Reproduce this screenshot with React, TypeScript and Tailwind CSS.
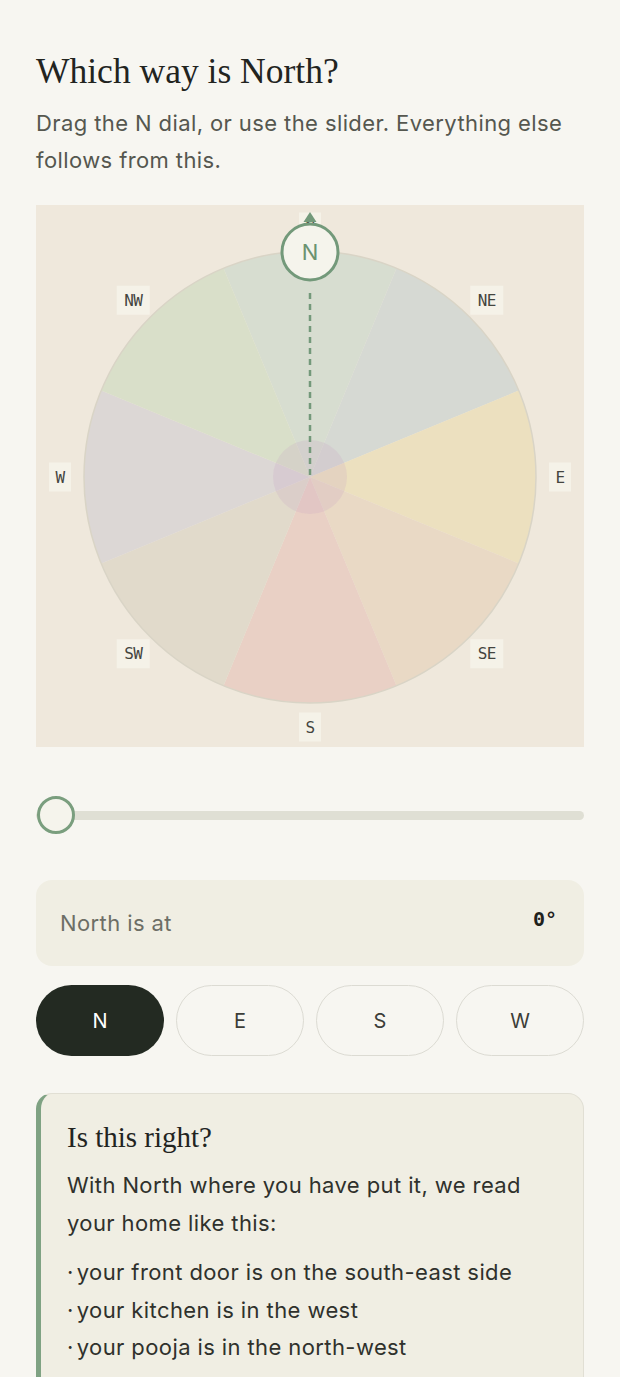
import React, { useState } from 'react';

const CX = 274;
const CY = 272;
const R = 226;
const LABEL_R = 250;

const directions = [
  { key: 'N', angle: 0, fill: '#d7ddd0' },
  { key: 'NE', angle: 45, fill: '#d6d9d3' },
  { key: 'E', angle: 90, fill: '#ece0bf' },
  { key: 'SE', angle: 135, fill: '#e9d9c5' },
  { key: 'S', angle: 180, fill: '#e9d0c5' },
  { key: 'SW', angle: 225, fill: '#e1dacb' },
  { key: 'W', angle: 270, fill: '#dcd7d5' },
  { key: 'NW', angle: 315, fill: '#d9dfc9' },
];

const pt = (deg: number, r: number) => {
  const a = (deg * Math.PI) / 180;
  return [CX + r * Math.sin(a), CY - r * Math.cos(a)];
};

const sectorPath = (deg: number) => {
  const [x1, y1] = pt(deg - 22.5, R);
  const [x2, y2] = pt(deg + 22.5, R);
  return `M ${CX} ${CY} L ${x1} ${y1} A ${R} ${R} 0 0 1 ${x2} ${y2} Z`;
};

function Compass() {
  return (
    <div className="bg-[#efe8dc] h-[542px] w-full">
      <svg viewBox="0 0 548 542" width="548" height="542" className="block">
        {directions.map(d => (
          <path key={d.key} d={sectorPath(d.angle)} fill={d.fill} />
        ))}
        <circle cx={CX} cy={CY} r={R} fill="none" stroke="#d9d4c6" strokeWidth="1.5" />
        <circle cx={CX} cy={CY} r={37} fill="#c9a3c6" fillOpacity="0.22" />

        {directions.map(d => {
          const [x, y] = pt(d.angle, LABEL_R);
          const w = d.key.length === 2 ? 33 : 22;
          return (
            <g key={d.key}>
              <rect x={x - w / 2} y={y - 14.5} width={w} height={29} fill="#f5f2e8" />
              <text
                x={x}
                y={y + 5.5}
                textAnchor="middle"
                fontSize="16"
                fill="#44453f"
                fontFamily="'DejaVu Sans Mono', monospace"
                letterSpacing="-0.6"
              >
                {d.key}
              </text>
            </g>
          );
        })}

        <line x1={CX} y1={88} x2={CX} y2={CY} stroke="#73997a" strokeWidth="2.5" strokeDasharray="6 5" />
        <polygon points={`${CX - 6.5},17 ${CX + 6.5},17 ${CX},7`} fill="#73997a" />
        <circle cx={CX} cy={47} r={28} fill="#f5f4ec" stroke="#73997a" strokeWidth="3" />
        <text
          x={CX}
          y={55}
          textAnchor="middle"
          fontSize="22"
          fill="#6a9270"
          fontFamily="Inter, sans-serif"
        >
          N
        </text>
      </svg>
    </div>
  );
}

export default function App() {
  const [dir, setDir] = useState('N');

  return (
    <div className="min-h-screen bg-[#f7f6f1] px-9 pt-[50px] font-['Inter',sans-serif] text-[#2a2c27]">
      <h1 className="font-['Liberation_Serif',serif] text-[35.5px] leading-[42px] text-[#22241f]">
        Which way is North?
      </h1>
      <p className="mt-[13px] text-[22px] leading-[37px] tracking-[0.4px] text-[#55574f]">
        Drag the N dial, or use the slider. Everything else follows from this.
      </p>

      <div className="mt-[26px]">
        <Compass />
      </div>

      <div className="relative mt-[49px] h-[38px] flex items-center">
        <div className="h-[9px] w-full rounded-full bg-[#dfdfd4]" />
        <div className="absolute left-px top-0 h-[38px] w-[38px] rounded-full border-[3px] border-[#7a9e7e] bg-[#f5f4ec]" />
      </div>

      <div className="mt-[46px] h-[86px] rounded-2xl bg-[#f0eee3] flex items-center justify-between pl-6 pr-[27px]">
        <span className="text-[22px] tracking-[0.4px] text-[#6d6e66]">North is at</span>
        <span className="font-['DejaVu_Sans_Mono',monospace] text-[20px] font-bold text-[#1f211d] -mt-2">0°</span>
      </div>

      <div className="mt-[19px] grid grid-cols-4 gap-3">
        {['N', 'E', 'S', 'W'].map(k => (
          <button
            key={k}
            onClick={() => setDir(k)}
            className={
              k === dir
                ? 'h-[71px] rounded-full bg-[#232a22] text-[20px] text-white'
                : 'h-[71px] rounded-full border border-[#dcdbd3] text-[20px] text-[#3c3d38]'
            }
          >
            {k}
          </button>
        ))}
      </div>

      <div className="mt-[37px] rounded-2xl border border-[#e1dfd4] border-l-[5px] border-l-[#7fa283] bg-[#f0eee3] pl-[26px] pr-6 pt-[25px] pb-8">
        <h2 className="font-['Liberation_Serif',serif] text-[29px] leading-[36px] text-[#22241f]">
          Is this right?
        </h2>
        <p className="mt-3 text-[22px] leading-[37.5px] tracking-[0.4px] text-[#2f312c]">
          With North where you have put it, we read your home like this:
        </p>
        <ul className="mt-3 text-[22px] leading-[37.5px] tracking-[0.4px] text-[#2f312c]">
          {[
            'your front door is on the south-east side',
            'your kitchen is in the west',
            'your pooja is in the north-west',
          ].map(item => (
            <li key={item}>
              <span className="mr-[3px]">·</span>
              {item}
            </li>
          ))}
        </ul>
      </div>
    </div>
  );
}
